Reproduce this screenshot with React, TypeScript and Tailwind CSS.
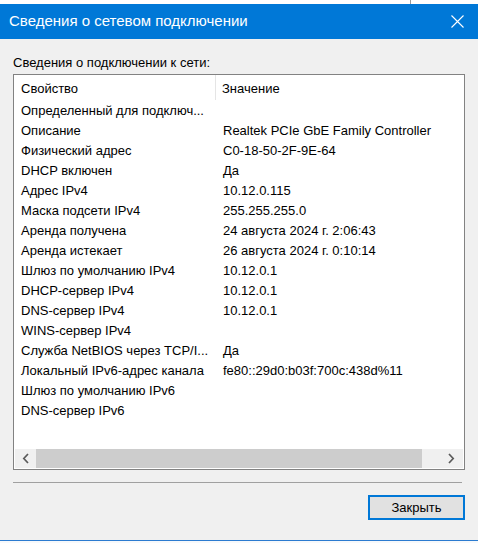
import React from "react";

const rows: [string, string][] = [
  ["Определенный для подключ...", ""],
  ["Описание", "Realtek PCIe GbE Family Controller"],
  ["Физический адрес", "C0-18-50-2F-9E-64"],
  ["DHCP включен", "Да"],
  ["Адрес IPv4", "10.12.0.115"],
  ["Маска подсети IPv4", "255.255.255.0"],
  ["Аренда получена", "24 августа 2024 г. 2:06:43"],
  ["Аренда истекает", "26 августа 2024 г. 0:10:14"],
  ["Шлюз по умолчанию IPv4", "10.12.0.1"],
  ["DHCP-сервер IPv4", "10.12.0.1"],
  ["DNS-сервер IPv4", "10.12.0.1"],
  ["WINS-сервер IPv4", ""],
  ["Служба NetBIOS через TCP/I...", "Да"],
  ["Локальный IPv6-адрес канала", "fe80::29d0:b03f:700c:438d%11"],
  ["Шлюз по умолчанию IPv6", ""],
  ["DNS-сервер IPv6", ""],
];

function App() {
  return (
    <div
      className="w-[478px] h-[543px] bg-[#f0f0f0] flex flex-col overflow-hidden text-black"
      style={{ fontFamily: '"Liberation Sans", Arial, sans-serif' }}
    >
      <div className="h-[4px] bg-white flex">
        <div className="w-[410px]" />
        <div className="w-px bg-[#9a9a9a]" />
      </div>

      <div className="h-[35px] bg-[#0078d7] flex items-center justify-between pl-[9px] pr-[13px]">
        <span className="text-white text-[15px]">Сведения о сетевом подключении</span>
        <svg width="13" height="13" viewBox="0 0 13 13" className="mr-[1px]">
          <path d="M0.5 0.5 L12.5 12.5 M12.5 0.5 L0.5 12.5" stroke="white" strokeWidth="1.1" />
        </svg>
      </div>

      <div className="flex-1 flex flex-col px-[13px] pt-[16px]">
        <div className="text-[13px] leading-[16px]">Сведения о подключении к сети:</div>

        <div className="mt-[3px] h-[396px] border border-[#828282] bg-white flex flex-col">
          <div className="h-[25px] flex items-center text-[13px]">
            <div className="w-[202px] pl-[7px] pt-[2px] h-full flex items-center border-r border-[#e5e5e5]">Свойство</div>
            <div className="pl-[6px] pt-[2px]">Значение</div>
          </div>

          {rows.map(([name, value]) => (
            <div key={name} className="h-[20px] pt-[1px] flex items-center text-[13px] whitespace-nowrap">
              <div className="w-[203px] pl-[7px]">{name}</div>
              <div className="pl-[6px]">{value}</div>
            </div>
          ))}

          <div className="flex-1" />

          <div className="h-[19px] mb-[1px] flex items-stretch bg-[#f0f0f0] mx-[1px]">
            <div className="w-[21px] flex items-center justify-center">
              <svg width="8" height="11" viewBox="0 0 8 11">
                <path d="M6 1 L1.8 5.5 L6 10" stroke="#5a5a5a" strokeWidth="1.7" fill="none" />
              </svg>
            </div>
            <div className="w-[386px] bg-[#cdcdcd]" />
            <div className="flex-1 flex items-center justify-end pr-[8px]">
              <svg width="8" height="11" viewBox="0 0 8 11">
                <path d="M2 1 L6.2 5.5 L2 10" stroke="#5a5a5a" strokeWidth="1.7" fill="none" />
              </svg>
            </div>
          </div>
        </div>

        <div className="mt-[12px] mr-[3px] h-px bg-[#a0a0a0]" />

        <div className="mt-[12px] flex justify-end">
          <button className="w-[97px] h-[25px] border-2 border-[#0078d7] bg-[#e1e1e1] text-[13px] flex items-center justify-center">
            Закрыть
          </button>
        </div>

        <div className="flex-1" />
      </div>

      <div className="h-[1px] bg-[#2b7bd0]" />
      <div className="h-[2px] bg-[#f7f9fb]" />
    </div>
  );
}

export default App;
